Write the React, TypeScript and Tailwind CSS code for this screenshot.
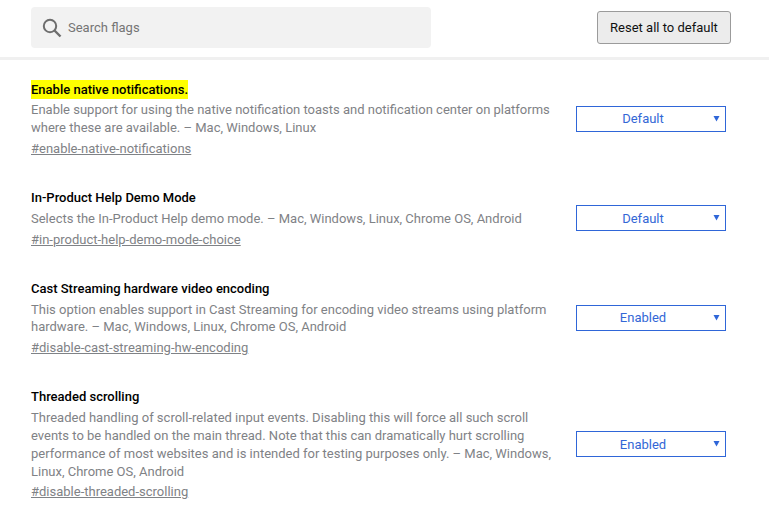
import React from 'react';

interface Flag {
  title: string;
  description: string;
  link: string;
  value: string;
  highlight?: boolean;
}

const flags: Flag[] = [
  {
    title: 'Enable native notifications.',
    description:
      'Enable support for using the native notification toasts and notification center on platforms where these are available. – Mac, Windows, Linux',
    link: '#enable-native-notifications',
    value: 'Default',
    highlight: true,
  },
  {
    title: 'In-Product Help Demo Mode',
    description: 'Selects the In-Product Help demo mode. – Mac, Windows, Linux, Chrome OS, Android',
    link: '#in-product-help-demo-mode-choice',
    value: 'Default',
  },
  {
    title: 'Cast Streaming hardware video encoding',
    description:
      'This option enables support in Cast Streaming for encoding video streams using platform hardware. – Mac, Windows, Linux, Chrome OS, Android',
    link: '#disable-cast-streaming-hw-encoding',
    value: 'Enabled',
  },
  {
    title: 'Threaded scrolling',
    description:
      'Threaded handling of scroll-related input events. Disabling this will force all such scroll events to be handled on the main thread. Note that this can dramatically hurt scrolling performance of most websites and is intended for testing purposes only. – Mac, Windows, Linux, Chrome OS, Android',
    link: '#disable-threaded-scrolling',
    value: 'Enabled',
  },
];

const FlagRow: React.FC<{ flag: Flag }> = ({ flag }) => (
  <div className="flex items-center justify-between">
    <div className="w-[525px]">
      <h2 className="h-[19px] text-[13px] leading-[19px] font-medium text-black">
        <span className={flag.highlight ? 'inline-block bg-[#ffff00]' : 'inline-block'}>{flag.title}</span>
      </h2>
      <p className="mt-[2.8px] text-[13px] leading-[17.9px] text-[#7f8286]">{flag.description}</p>
      <a className="mt-[1.7px] block h-[19px] text-[13px] leading-[19px] text-[#7f8286] underline">{flag.link}</a>
    </div>
    <div className="relative flex h-[26px] w-[150px] items-center justify-center border border-[#2f66d8] pr-[16px] text-[13px] text-[#3367d6]">
      {flag.value}
      <svg className="absolute right-[5px] top-[8px]" width="7" height="7" viewBox="0 0 7 7">
        <path d="M0.5 1H6.5L3.5 6.5Z" fill="#2f66d8" />
      </svg>
    </div>
  </div>
);

export default function App() {
  return (
    <div className="h-[512px] w-[769px] overflow-hidden bg-white font-['Roboto',sans-serif]">
      <header className="flex h-[60px] items-start justify-between border-b-[3px] border-[#f0f0f0] pl-[31px] pr-[38px] pt-[7px]">
        <div className="flex h-[41px] w-[400px] items-center rounded-[4px] bg-[#f2f2f2] pl-[11px]">
          <svg width="20" height="20" viewBox="0 0 20 20" fill="none" stroke="#6e6e6e">
            <circle cx="8" cy="8" r="6.2" strokeWidth="2" />
            <path d="M12.5 12.5L18.5 18.5" strokeWidth="2.4" />
          </svg>
          <span className="ml-[6px] text-[13px] text-[#757575]">Search flags</span>
        </div>
        <button className="mt-[4px] h-[33px] w-[134px] rounded-[3px] border border-[#9b9b9b] bg-[#ececec] text-[13px] text-[#111111]">
          Reset all to default
        </button>
      </header>
      <main className="flex w-[726px] flex-col gap-[30.2px] pl-[31px] pt-[19.7px]">
        {flags.map((flag) => (
          <FlagRow key={flag.link} flag={flag} />
        ))}
      </main>
    </div>
  );
}
